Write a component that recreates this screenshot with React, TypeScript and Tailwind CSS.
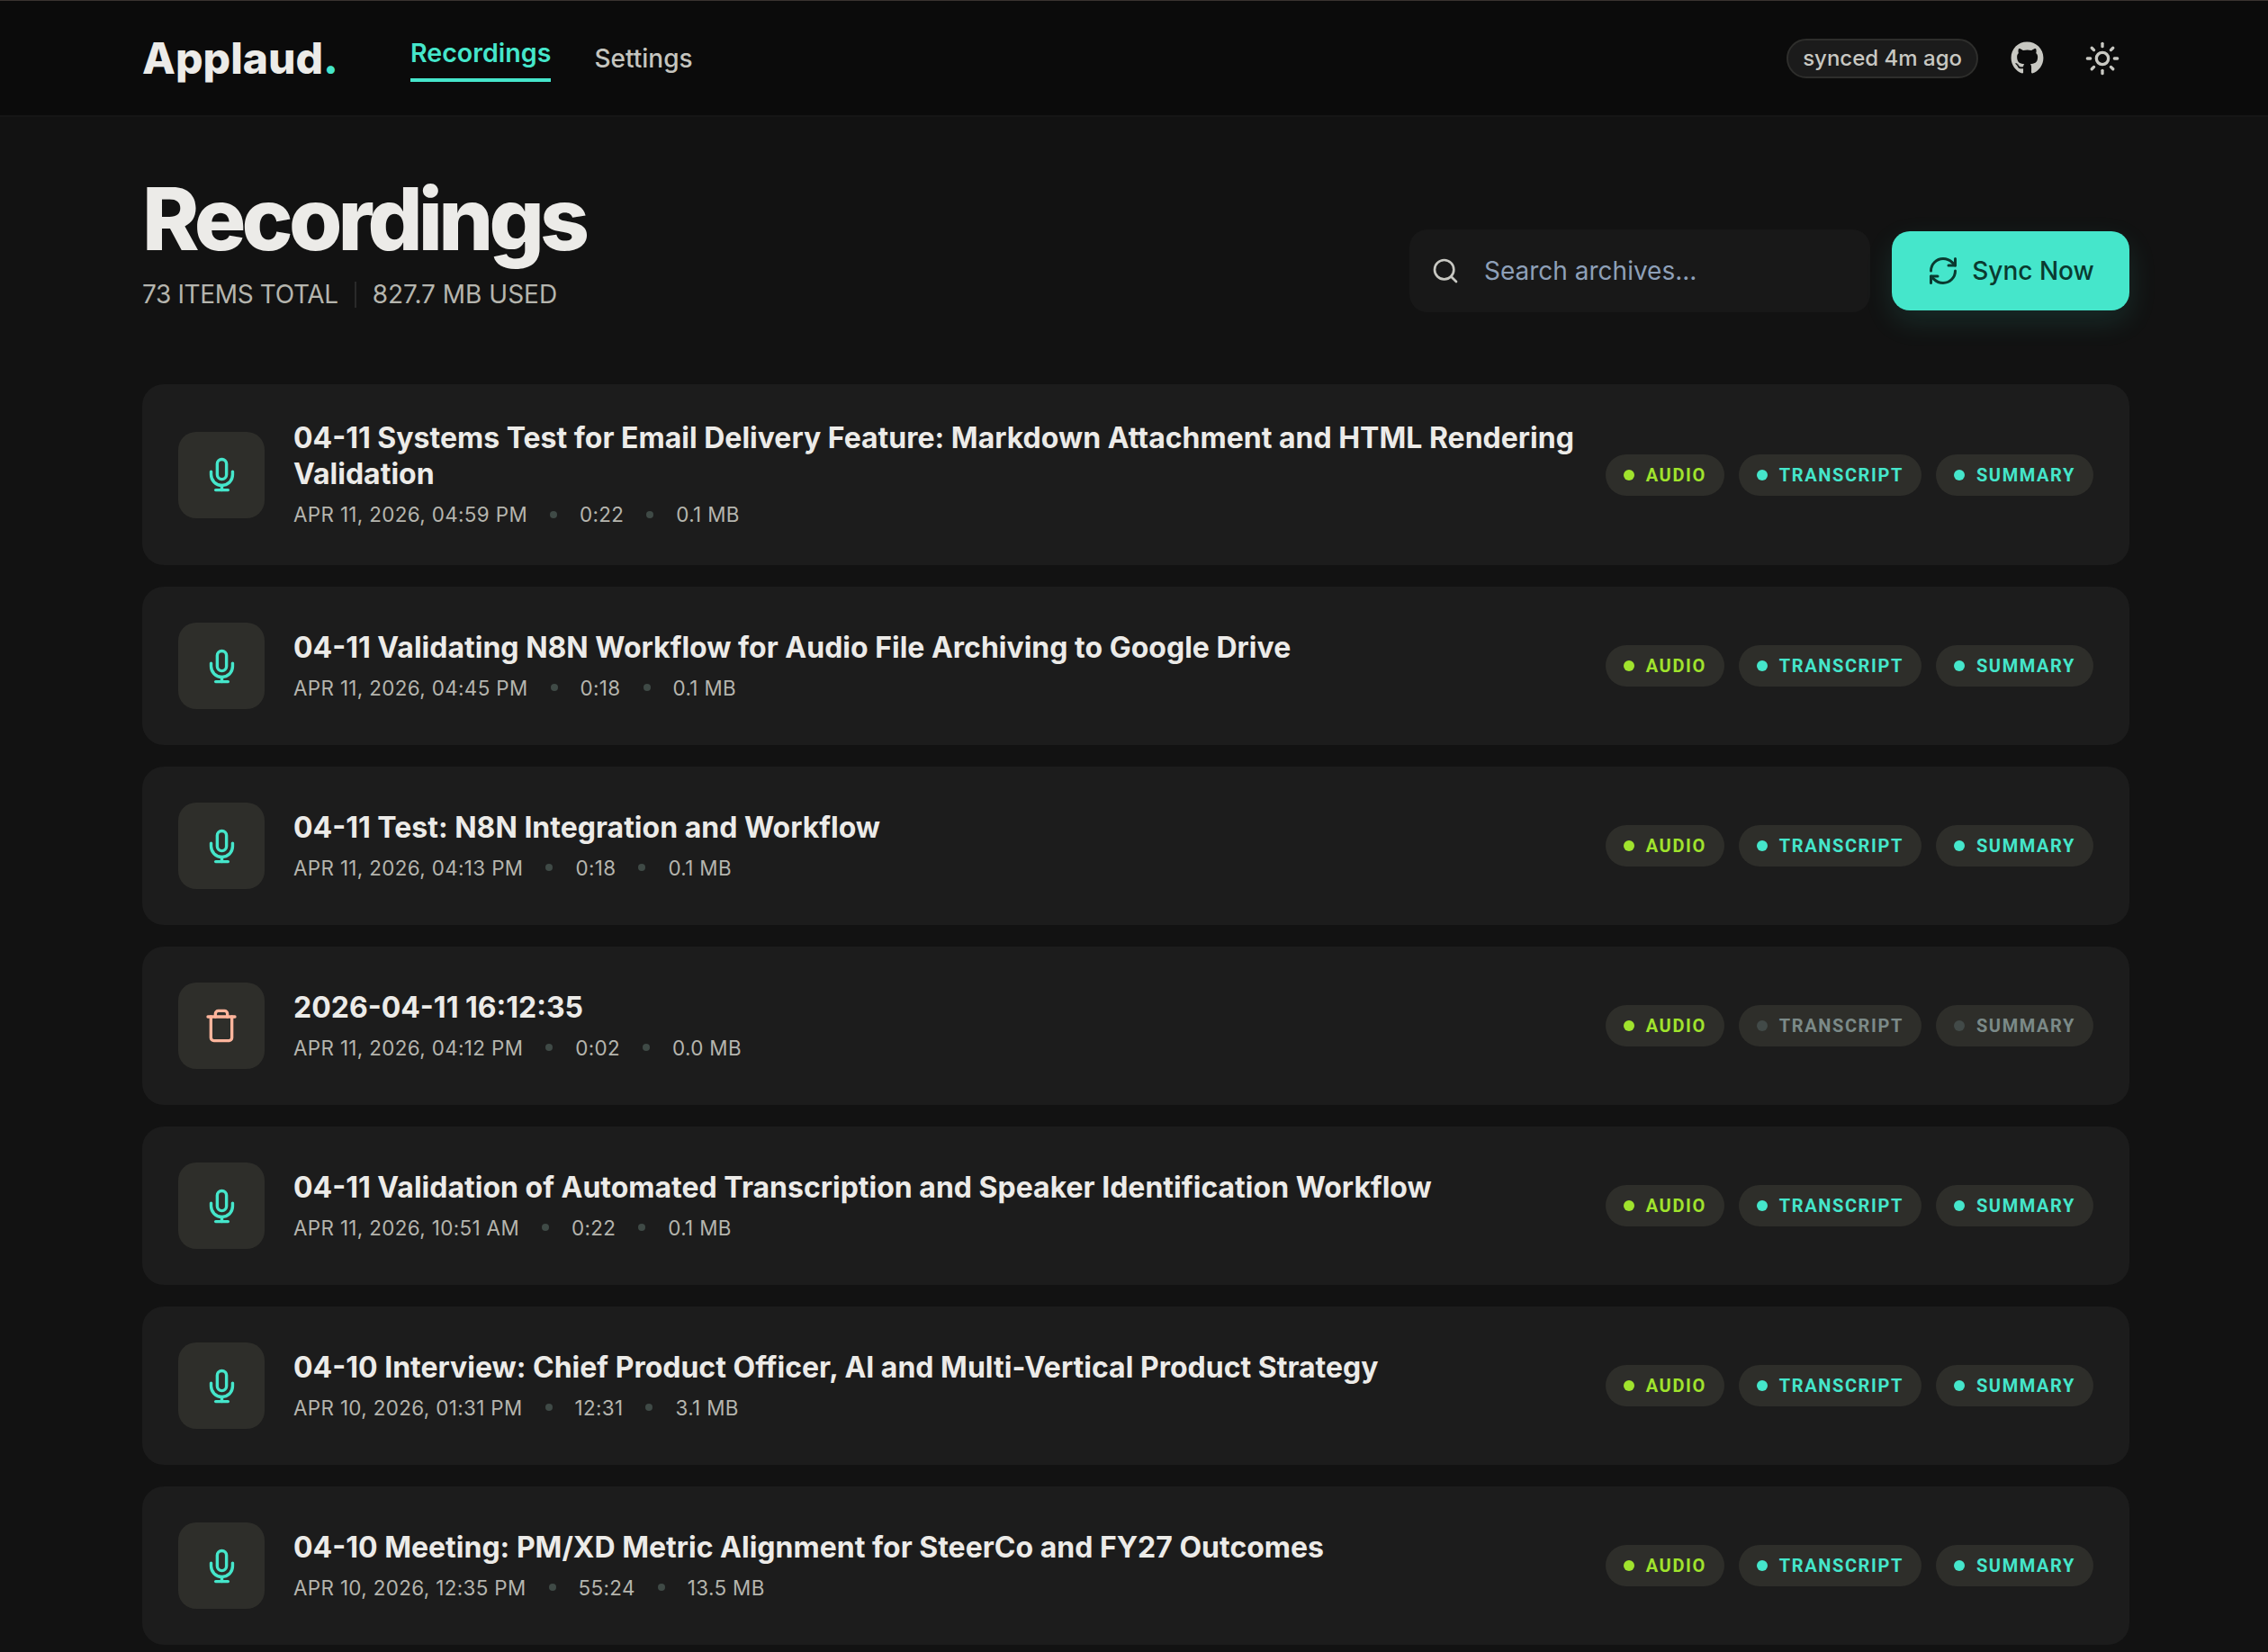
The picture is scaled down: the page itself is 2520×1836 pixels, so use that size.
import { RefreshCw, Search, Sun, Trash } from "lucide-react";
import { FaGithub } from "react-icons/fa";

const recordings = [
  { title: "04-11 Systems Test for Email Delivery Feature: Markdown Attachment and HTML Rendering Validation", date: "APR 11, 2026, 04:59 PM", length: "0:22", size: "0.1 MB", done: true },
  { title: "04-11 Validating N8N Workflow for Audio File Archiving to Google Drive", date: "APR 11, 2026, 04:45 PM", length: "0:18", size: "0.1 MB", done: true },
  { title: "04-11 Test: N8N Integration and Workflow", date: "APR 11, 2026, 04:13 PM", length: "0:18", size: "0.1 MB", done: true },
  { title: "2026-04-11 16:12:35", date: "APR 11, 2026, 04:12 PM", length: "0:02", size: "0.0 MB", done: false },
  { title: "04-11 Validation of Automated Transcription and Speaker Identification Workflow", date: "APR 11, 2026, 10:51 AM", length: "0:22", size: "0.1 MB", done: true },
  { title: "04-10 Interview: Chief Product Officer, AI and Multi-Vertical Product Strategy", date: "APR 10, 2026, 01:31 PM", length: "12:31", size: "3.1 MB", done: true },
  { title: "04-10 Meeting: PM/XD Metric Alignment for SteerCo and FY27 Outcomes", date: "APR 10, 2026, 12:35 PM", length: "55:24", size: "13.5 MB", done: true },
];

function MicIcon() {
  return (
    <svg width="41" height="41" viewBox="0 0 24 24" fill="none" stroke="#45e6cb" strokeWidth="2" strokeLinecap="round" strokeLinejoin="round">
      <rect x="9" y="2" width="6" height="13" rx="3" />
      <path d="M19 10v2a7 7 0 0 1-14 0v-2" />
      <path d="M12 19v3" />
      <path d="M8 22h8" />
    </svg>
  );
}

function Tag({ label, tone }: { label: string; tone: "lime" | "teal" | "off" }) {
  const dot = tone === "lime" ? "bg-[#a0e32d]" : tone === "teal" ? "bg-[#45e6cb]" : "bg-[#424a48]";
  const text = tone === "lime" ? "text-[#a0e32d]" : tone === "teal" ? "text-[#45e6cb]" : "text-[#7b8a88]";
  return (
    <span className="flex h-[46px] items-center gap-[13px] rounded-full bg-[#2e2e2a] px-[20px]">
      <span className={`h-[12px] w-[12px] rounded-full ${dot}`} />
      <span className={`text-[20px] font-bold tracking-[0.08em] font-['Roboto',sans-serif] ${text}`}>{label}</span>
    </span>
  );
}

export default function App() {
  return (
    <div className="min-h-screen border-t border-[#3a3330] bg-[#121212] font-['Inter',sans-serif] text-[#ecebe8]">
      <nav className="flex h-[129px] items-center border-b-2 border-[#161616] bg-[#0b0b0b] pl-[158px] pr-[154px]">
        <span className="text-[48px] font-extrabold">
          Applaud<span className="text-[#45e6cb]">.</span>
        </span>
        <div className="ml-[80px] flex items-center gap-[48px] text-[28px] font-medium">
          <a className="border-b-4 border-[#45e6cb] pb-[8px] text-[28.6px] font-semibold leading-[41px] text-[#45e6cb]">Recordings</a>
          <a className="leading-[40px] text-[#c5c5bf]">Settings</a>
        </div>
        <div className="ml-auto flex items-center pr-[10px] text-[#c8c8c2]">
          <span className="flex h-[44px] items-center rounded-full border-2 border-[#2e2e2c] bg-[#1b1b1b] px-[16px] text-[24px] font-medium">
            synced 4m ago
          </span>
          <FaGithub size={37} className="ml-[36px]" />
          <Sun size={40} className="ml-[45px]" />
        </div>
      </nav>

      <main className="pl-[158px] pr-[154px] pt-[65px]">
        <div className="mb-[80px] flex items-end justify-between">
          <div>
            <h1 className="text-[96px] font-extrabold leading-[96px] tracking-[-0.05em]">Recordings</h1>
            <div className="mt-[16px] flex items-center gap-[18px] text-[28px] leading-[40px] text-[#b5b5ae]">
              <span className="tracking-[-0.013em]">73 ITEMS TOTAL</span>
              <span className="h-[29px] w-[2px] bg-[#2a2a2a]" />
              <span>827.7 MB USED</span>
            </div>
          </div>
          <div className="flex items-center gap-[24px]">
            <label className="flex h-[92px] w-[512px] items-center gap-[27px] rounded-[20px] bg-[#181818] pl-[24px] text-[#c8c8c2]">
              <Search size={32} />
              <input placeholder="Search archives..." className="min-w-0 flex-1 bg-transparent text-[28px] outline-none placeholder:text-[#8ea0b8]" />
            </label>
            <button className="flex h-[88px] w-[264px] items-center justify-center gap-[14px] rounded-[20px] bg-[#45e6cb] text-[28px] font-medium text-[#0a3a30] shadow-[0_12px_32px_rgba(69,230,203,0.12)]">
              <RefreshCw size={36} />
              Sync Now
            </button>
          </div>
        </div>

        <div className="flex flex-col gap-[24px]">
          {recordings.map((r) => (
            <div key={r.date} className="flex items-center gap-[32px] rounded-[24px] bg-[#1c1c1c] p-[40px]">
              <div className="flex h-[96px] w-[96px] shrink-0 items-center justify-center rounded-[20px] bg-[#2e2e2a]">
                {r.done ? <MicIcon /> : <Trash size={40} color="#ffb59c" />}
              </div>
              <div className="min-w-0 flex-1">
                <div className="text-[32px] font-bold leading-[40px]">{r.title}</div>
                <div className="mt-[8px] flex items-center gap-[25px] text-[22.4px] leading-[33px] tracking-[0.016em] text-[#b5b5ae]">
                  <span>{r.date}</span>
                  <span className="h-[8px] w-[8px] rounded-full bg-[#3f4a46]" />
                  <span>{r.length}</span>
                  <span className="h-[8px] w-[8px] rounded-full bg-[#3f4a46]" />
                  <span>{r.size}</span>
                </div>
              </div>
              <div className="flex shrink-0 items-center gap-[16px]">
                <Tag label="AUDIO" tone="lime" />
                <Tag label="TRANSCRIPT" tone={r.done ? "teal" : "off"} />
                <Tag label="SUMMARY" tone={r.done ? "teal" : "off"} />
              </div>
            </div>
          ))}
        </div>
      </main>
    </div>
  );
}
